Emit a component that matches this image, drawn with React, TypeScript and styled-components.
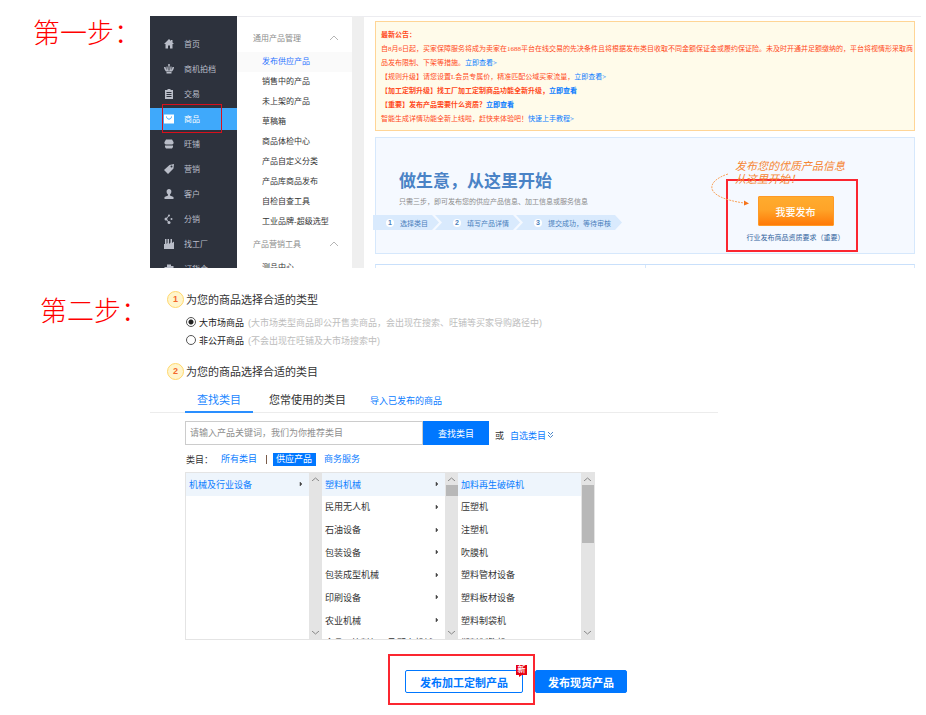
import React from 'react';
import styled, { createGlobalStyle } from 'styled-components';

const GlobalStyle = createGlobalStyle`
  * { box-sizing: border-box; }
  body {
    margin: 0;
    background: #fff;
    color: #333;
    font-family: "Liberation Sans", "Noto Sans CJK SC", sans-serif;
    font-size: 9px;
  }
  ul, h2, h3, p { margin: 0; padding: 0; list-style: none; font-weight: 400; }
  a { text-decoration: none; color: #0a7cff; }
  button, input { font-family: inherit; }
`;

const Page = styled.main`
  padding: 16px 5px 10px 0;
`;

const Step = styled.section`
  display: flex;
`;

const StepLabel = styled.h2<{ $indent: number; $top: number }>`
  flex: 0 0 150px;
  padding: ${p => p.$top}px 0 0 ${p => p.$indent}px;
  color: #ff0000;
  font-family: "Noto Sans CJK SC", sans-serif;
  font-size: 27px;
  font-weight: 300;
  line-height: 32px;
  white-space: nowrap;
`;

/* ---------- step one: seller console ---------- */

const Console = styled.div`
  flex: 1;
  min-width: 0;
  display: flex;
  height: 252px;
  overflow: hidden;
`;

const Sidebar = styled.nav`
  flex: 0 0 87px;
  padding-top: 17px;
  background: #2d323d;
`;

const NavList = styled.ul`
  display: grid;
  gap: 3px;
`;

const NavItem = styled.li`
  position: relative;
`;

const NavLink = styled.a<{ $active?: boolean }>`
  display: flex;
  align-items: center;
  gap: 10px;
  height: 22px;
  padding: 0 0 1px 14px;
  font-size: 8px;
  color: ${p => (p.$active ? '#fff' : '#b9bdc8')};
  background: ${p => (p.$active ? '#3fa9fb' : 'transparent')};
  svg { display: block; }
`;

const NavMark = styled.span`
  position: absolute;
  left: 12px;
  top: -4px;
  width: 60px;
  height: 29px;
  border: 1px solid #d8101c;
`;

const SubMenu = styled.nav`
  flex: 0 0 115px;
  padding-top: 9px;
  border-top: 1px solid #ececf0;
  font-size: 8px;
`;

const GroupButton = styled.button`
  display: flex;
  align-items: center;
  justify-content: space-between;
  width: 100%;
  height: 26px;
  padding: 0 13px 3px 16px;
  border: 0;
  background: none;
  color: #8c8c8c;
  font-size: 8px;
`;

const SubLink = styled.a<{ $active?: boolean }>`
  display: block;
  padding-left: 25px;
  line-height: 20px;
  color: ${p => (p.$active ? '#2b72ff' : '#333')};
  background: ${p => (p.$active ? '#fafafa' : 'transparent')};
`;

const Workspace = styled.div`
  flex: 1;
  min-width: 0;
  display: grid;
  align-content: start;
  gap: 6px;
  padding: 4px 6px 0 11px;
  border-left: 12px solid #efefef;
  border-top: 1px solid #ececf0;
`;

const Notice = styled.div`
  padding: 6px 1px 4px 5px;
  border: 1px solid #ffd596;
  background: #fffbea;
  color: #ff4a1c;
  font-family: "Liberation Serif", "Noto Sans CJK SC", sans-serif;
  font-size: 7px;
  line-height: 14px;
  a { display: inline-block; height: 14px; vertical-align: top; }
`;

const NoticeLine = styled.p<{ $bold?: boolean }>`
  font-weight: ${p => (p.$bold ? 700 : 400)};
`;

const Banner = styled.div`
  display: flex;
  justify-content: space-between;
  height: 117px;
  border: 1px solid #d6e8fc;
  background: #f5f9ff;
`;

const Pitch = styled.div`
  padding-top: 32px;
`;

const PitchTitle = styled.h3`
  padding-left: 23px;
  color: #4a83c6;
  font-size: 17px;
  font-weight: 700;
  line-height: 24px;
`;

const PitchText = styled.p`
  padding-left: 23px;
  color: #8b8b8b;
  font-size: 7px;
  line-height: 16px;
`;

const Ribbon = styled.ul`
  display: flex;
  margin: 5px 0 0 -3px;
`;

const RibbonStep = styled.li<{ $first?: boolean }>`
  display: flex;
  align-items: center;
  gap: 6px;
  height: 15px;
  margin-left: ${p => (p.$first ? 0 : -4)}px;
  padding: 0 11px 0 ${p => (p.$first ? 13 : 18)}px;
  background: #d9eafd;
  color: #4a7fbc;
  font-size: 7px;
  white-space: nowrap;
  clip-path: ${p =>
    p.$first
      ? 'polygon(0 0, calc(100% - 7px) 0, 100% 50%, calc(100% - 7px) 100%, 0 100%)'
      : 'polygon(0 0, calc(100% - 7px) 0, 100% 50%, calc(100% - 7px) 100%, 0 100%, 7px 50%)'};
`;

const RibbonNumber = styled.span`
  width: 8px;
  height: 8px;
  border-radius: 50%;
  background: #fff;
  font-size: 7px;
  font-weight: 700;
  line-height: 8px;
  text-align: center;
`;

const Callout = styled.div`
  position: relative;
  display: flex;
  flex-direction: column;
  align-items: center;
  align-self: flex-start;
  width: 132px;
  height: 73px;
  margin: 41px 56px 0 0;
  padding: 15px 0 0 7px;
  border: 2px solid #fb2630;
`;

const HandNote = styled.p`
  position: absolute;
  left: 7px;
  top: -21px;
  color: #f58634;
  font-size: 11px;
  font-style: italic;
  line-height: 13px;
  white-space: nowrap;
`;

const CurvedArrow = styled.svg`
  position: absolute;
  left: -20px;
  top: -8px;
`;

const PublishButton = styled.button`
  flex: none;
  width: 76px;
  height: 30px;
  padding: 0;
  border: 1px solid #ff9a26;
  border-radius: 1px;
  background: linear-gradient(#ffab2e, #ffa428 45%, #ff7a08);
  color: #fff;
  font-size: 10px;
  font-weight: 500;
`;

const RuleLink = styled.a`
  margin-top: 5px;
  color: #33659e;
  font-size: 7px;
  line-height: 14px;
  white-space: nowrap;
`;

const Panels = styled.div`
  display: grid;
  grid-template-columns: 1fr 1fr;
  height: 20px;
  margin-top: 4px;
  border: 1px solid #d6e8fc;
  border-top-color: #c9e0fb;
`;

const Panel = styled.div`
  & + & { border-left: 1px solid #d6e8fc; }
`;

/* ---------- step two: category form ---------- */

const Form = styled.form`
  flex: 1;
  min-width: 0;
  padding-top: 22px;
`;

const FormHeading = styled.h3`
  display: flex;
  align-items: center;
  gap: 2px;
  height: 18px;
  padding-left: 17px;
  font-size: 11px;
  color: #333;
`;

const StepBadge = styled.span`
  width: 17px;
  height: 17px;
  border: 1px solid #ffd76b;
  border-radius: 50%;
  background: #fff5cc;
  color: #f4682c;
  font-size: 9px;
  font-weight: 700;
  line-height: 15px;
  text-align: center;
`;

const Choices = styled.div`
  padding: 5px 0 13px 36px;
`;

const Choice = styled.label`
  display: flex;
  align-items: center;
  height: 18px;
  font-size: 9px;
  color: #222;
`;

const Radio = styled.input`
  appearance: none;
  width: 10px;
  height: 10px;
  margin: 0 3px 0 0;
  border: 1px solid #555;
  border-radius: 50%;
  background: #fff;
  &:checked { background: radial-gradient(circle, #222 0 2px, #fff 3px); }
`;

const Hint = styled.span`
  margin-left: 4px;
  color: #bdbdbd;
`;

const Tabs = styled.div`
  display: flex;
  max-width: 568px;
  height: 25px;
  margin-top: 8px;
  padding-left: 35px;
  border-bottom: 1px solid #ececec;
`;

const Tab = styled.button<{ $active?: boolean }>`
  height: 25px;
  padding: 0 12px;
  border: 0;
  border-bottom: 2px solid ${p => (p.$active ? '#2a8fff' : 'transparent')};
  background: none;
  color: ${p => (p.$active ? '#1a86ff' : '#333')};
  font-size: 11px;
  line-height: 22px;
  & + & { padding: 0 16px; }
`;

const ImportLink = styled.a`
  margin-left: 8px;
  line-height: 26px;
`;

const Body = styled.div`
  padding: 8px 0 0 35px;
`;

const SearchRow = styled.div`
  display: flex;
  align-items: center;
`;

const SearchInput = styled.input`
  width: 238px;
  height: 24px;
  padding: 0 4px;
  border: 1px solid #ccc;
  border-radius: 0;
  font-size: 9px;
  &::placeholder { color: #8f8f8f; opacity: 1; }
`;

const SearchButton = styled.button`
  width: 66px;
  height: 24px;
  padding: 0;
  border: 0;
  background: #0077ff;
  color: #fff;
  font-size: 9px;
`;

const Or = styled.span`
  margin: 4px 6px 0;
`;

const PickLink = styled.a`
  display: flex;
  align-items: center;
  gap: 1px;
  margin-top: 4px;
`;

const Filter = styled.div`
  display: flex;
  align-items: center;
  height: 27px;
  padding: 2px 0 0 1px;
`;

const FilterLink = styled.a<{ $on?: boolean }>`
  margin-right: ${p => (p.$on ? 5 : 0)}px;
  padding: 0 ${p => (p.$on ? 4 : 0)}px 0 3px;
  line-height: 13px;
  background: ${p => (p.$on ? '#0077ff' : 'transparent')};
  color: ${p => (p.$on ? '#fff' : '#0a7cff')};
`;

const FilterBar = styled.span`
  width: 1px;
  height: 9px;
  margin: 0 6px 0 9px;
  background: #7a5c4a;
`;

const FilterLabel = styled.span`
  width: 32px;
`;

const Browser = styled.div`
  display: grid;
  grid-template-columns: repeat(3, 1fr);
  width: 410px;
  max-width: 100%;
  height: 168px;
  border: 1px solid #e4e4e4;
`;

const Column = styled.div`
  display: flex;
  min-width: 0;
  overflow: hidden;
`;

const Rows = styled.ul`
  flex: 1;
  display: grid;
  grid-template-rows: repeat(8, 1fr);
  height: 181px;
`;

const RowLink = styled.a<{ $active?: boolean }>`
  display: flex;
  align-items: center;
  justify-content: space-between;
  height: 100%;
  padding: 0 6px 0 3px;
  white-space: nowrap;
  background: ${p => (p.$active ? '#eef5fc' : 'transparent')};
  color: ${p => (p.$active ? '#0a7cff' : '#333')};
`;

const Track = styled.div`
  flex: 0 0 13px;
  display: flex;
  flex-direction: column;
  align-items: center;
  background: #e4e4e4;
  svg { flex: none; margin: 4px 0; }
  svg:last-child { margin-top: auto; }
`;

const Thumb = styled.span<{ $size: number }>`
  width: 12px;
  height: ${p => p.$size}px;
  background: #b8b8b8;
`;

const Actions = styled.div`
  display: flex;
  align-items: baseline;
  padding: 14px 0 0 203px;
`;

const CustomFrame = styled.div`
  padding: 14px 10px 10px 15px;
  border: 2px solid #fb2630;
`;

const CustomWrap = styled.div`
  position: relative;
`;

const ActionButton = styled.button<{ $primary?: boolean }>`
  display: block;
  height: 23px;
  padding: 0 ${p => (p.$primary ? 12 : 14)}px;
  border: 1px solid #0077ff;
  border-radius: 2px;
  background: ${p => (p.$primary ? '#0077ff' : '#fff')};
  color: ${p => (p.$primary ? '#fff' : '#0077ff')};
  font-size: 11px;
  font-weight: 700;
  white-space: nowrap;
`;

const NewBadge = styled.span`
  position: absolute;
  right: -4px;
  top: -5px;
  width: 11px;
  height: 10px;
  background: #e60012;
  color: #fff;
  font-size: 8px;
  font-weight: 500;
  line-height: 10px;
  text-align: center;
  &::after {
    content: "";
    position: absolute;
    left: 3px;
    top: 10px;
    border-top: 2px solid #e60012;
    border-right: 3px solid transparent;
  }
`;

const icons: Record<string, React.ReactNode> = {
  home: <path d="M10 0 0 10h3v9h5v-6h4v6h5v-9h3l-3-3V2h-3v2z" />,
  crown: (
    <path d="M10 0a2 2 0 0 1 2 2l-1 2v9h1l1-8h2v8l2-7h3c0 4-2 6-4 9H4C2 12 0 10 0 6h3l2 7V5h2l1 8h1V4L8 2a2 2 0 0 1 2-2zM5 16h10v3H5z" />
  ),
  clipboard: (
    <path fillRule="evenodd" d="M7 0h6v2h5v18H2V2h5zM5 6v2h10V6zm0 4v2h10v-2zm0 4v2h10v-2z" />
  ),
  bag: (
    <>
      <path d="M0 1h20v18H0z" />
      <path d="M5 5c0 7 10 7 10 0" fill="none" stroke="#3fa9fb" strokeWidth="2" />
    </>
  ),
  shop: <path d="M4 1h12l3 5c1 3-1 5-3 5H4c-2 0-4-2-3-5zM2 13h16v3l-2 3H4l-2-3z" />,
  tag: <path fillRule="evenodd" d="M11 2 20 0l-1 9L8 20 0 12zM15 3a2 2 0 1 0 0 4 2 2 0 0 0 0-4z" />,
  user: <path d="M10 0c6 0 6 8 2 11v2l7 3v4H1v-4l7-3v-2C4 8 4 0 10 0z" />,
  share: (
    <>
      <circle cx="4" cy="10" r="3" />
      <circle cx="10" cy="3" r="2" />
      <circle cx="10" cy="17" r="3" />
      <circle cx="15" cy="10" r="2" />
      <path d="M4 10l6-7M4 10l6 7" stroke="currentColor" strokeWidth="2" />
    </>
  ),
  factory: <path d="M2 0h3v10l2-2V0h3v10l3-3V0h3v8l4-3v15H0V10h2z" />,
  order: <path d="M6 1h8v3h5v16h-8V9H9v8H1V6h5z" />,
};

const NavIcon = ({ name }: { name: string }) => (
  <svg width="10" height="10" viewBox="0 0 20 20" fill="currentColor" aria-hidden="true">
    {icons[name]}
  </svg>
);

const ChevronUp = () => (
  <svg width="10" height="6" viewBox="0 0 10 6" fill="none" stroke="#b5b5b5" aria-hidden="true">
    <path d="M1 5 5 1l4 4" />
  </svg>
);

const Caret = () => (
  <svg width="4" height="6" viewBox="0 0 4 6" fill="#444" aria-hidden="true">
    <path d="M1 1v4l2-2z" stroke="#444" strokeWidth=".5" />
  </svg>
);

const TrackArrow = ({ down }: { down?: boolean }) => (
  <svg width="7" height="4" viewBox="0 0 7 4" fill="none" stroke="#888" aria-hidden="true">
    <path d={down ? 'M0 0l3.500 3L7 0' : 'M0 4l3.500-3L7 4'} />
  </svg>
);

const navItems: [string, string][] = [
  ['home', '首页'],
  ['crown', '商机拍档'],
  ['clipboard', '交易'],
  ['bag', '商品'],
  ['shop', '旺铺'],
  ['tag', '营销'],
  ['user', '客户'],
  ['share', '分销'],
  ['factory', '找工厂'],
  ['order', '订货会'],
];

const productLinks = [
  '发布供应产品', '销售中的产品', '未上架的产品', '草稿箱', '商品体检中心',
  '产品自定义分类', '产品库商品发布', '自检自查工具', '工业品牌-超级选型',
];

const columns: { rows: string[]; carets: boolean; thumb: number }[] = [
  { rows: ['机械及行业设备'], carets: true, thumb: 0 },
  {
    rows: ['塑料机械', '民用无人机', '石油设备', '包装设备', '包装成型机械', '印刷设备', '农业机械', '食品、饮料加工及配套机械'],
    carets: true,
    thumb: 11,
  },
  {
    rows: ['加料再生破碎机', '压塑机', '注塑机', '吹膜机', '塑料管材设备', '塑料板材设备', '塑料制袋机', '塑料制管机'],
    carets: false,
    thumb: 58,
  },
];

export default function App() {
  return (
    <>
      <GlobalStyle />
      <Page lang="zh-CN">
        <Step>
          <StepLabel $indent={33} $top={0}>第一步：</StepLabel>
          <Console>
            <Sidebar>
              <NavList>
                {navItems.map(([icon, label]) => {
                  const active = label === '商品';
                  return (
                    <NavItem key={label}>
                      <NavLink href="#" $active={active}>
                        <NavIcon name={icon} />
                        {label}
                      </NavLink>
                      {active && <NavMark />}
                    </NavItem>
                  );
                })}
              </NavList>
            </Sidebar>
            <SubMenu>
              <GroupButton type="button">通用产品管理<ChevronUp /></GroupButton>
              <ul>
                {productLinks.map((label, i) => (
                  <li key={label}><SubLink href="#" $active={i === 0}>{label}</SubLink></li>
                ))}
              </ul>
              <GroupButton type="button">产品营销工具<ChevronUp /></GroupButton>
              <ul>
                <li><SubLink href="#">测品中心</SubLink></li>
              </ul>
            </SubMenu>
            <Workspace>
              <Notice>
                <NoticeLine $bold>最新公告：</NoticeLine>
                <NoticeLine>
                  自8月6日起，买家保障服务将成为卖家在1688平台在线交易的先决条件且将根据发布类目收取不同金额保证金或履约保证险。未及时开通并足额缴纳的，平台将视情形采取商品发布限制、下架等措施。<a href="#">立即查看&gt;</a>
                </NoticeLine>
                <NoticeLine>【规则升级】请您设置L会员专属价，精准匹配公域买家流量，<a href="#">立即查看&gt;</a></NoticeLine>
                <NoticeLine $bold>【加工定制升级】找工厂加工定制商品功能全新升级，<a href="#">立即查看</a></NoticeLine>
                <NoticeLine $bold>【重要】发布产品需要什么资质？<a href="#">立即查看</a></NoticeLine>
                <NoticeLine>智能生成详情功能全新上线啦，赶快来体验吧！<a href="#">快速上手教程&gt;</a></NoticeLine>
              </Notice>
              <Banner>
                <Pitch>
                  <PitchTitle>做生意，从这里开始</PitchTitle>
                  <PitchText>只需三步，即可发布您的供应产品信息、加工信息或服务信息</PitchText>
                  <Ribbon>
                    <RibbonStep $first><RibbonNumber>1</RibbonNumber>选择类目</RibbonStep>
                    <RibbonStep><RibbonNumber>2</RibbonNumber>填写产品详情</RibbonStep>
                    <RibbonStep><RibbonNumber>3</RibbonNumber>提交成功，等待审核</RibbonStep>
                  </Ribbon>
                </Pitch>
                <Callout>
                  <HandNote>发布您的优质产品信息<br />从这里开始！</HandNote>
                  <CurvedArrow width="44" height="36" viewBox="0 0 44 36" fill="none" aria-hidden="true">
                    <path d="M20 1C-2 8-6 24 36 30" stroke="#f9a45c" strokeDasharray="2 1" />
                    <path d="M36 27.500v5l5-2z" fill="#f5741c" />
                  </CurvedArrow>
                  <PublishButton type="button">我要发布</PublishButton>
                  <RuleLink href="#">行业发布商品资质要求（重要）</RuleLink>
                </Callout>
              </Banner>
              <Panels><Panel /><Panel /></Panels>
            </Workspace>
          </Console>
        </Step>

        <Step>
          <StepLabel $indent={40} $top={26}>第二步：</StepLabel>
          <Form onSubmit={e => e.preventDefault()}>
            <FormHeading><StepBadge>1</StepBadge>为您的商品选择合适的类型</FormHeading>
            <Choices>
              <Choice>
                <Radio type="radio" name="kind" defaultChecked />
                大市场商品<Hint>(大市场类型商品即公开售卖商品，会出现在搜索、旺铺等买家导购路径中)</Hint>
              </Choice>
              <Choice>
                <Radio type="radio" name="kind" />
                非公开商品<Hint>(不会出现在旺铺及大市场搜索中)</Hint>
              </Choice>
            </Choices>
            <FormHeading><StepBadge>2</StepBadge>为您的商品选择合适的类目</FormHeading>
            <Tabs>
              <Tab type="button" $active>查找类目</Tab>
              <Tab type="button">您常使用的类目</Tab>
              <ImportLink href="#">导入已发布的商品</ImportLink>
            </Tabs>
            <Body>
              <SearchRow>
                <SearchInput type="text" aria-label="产品关键词" placeholder="请输入产品关键词，我们为你推荐类目" />
                <SearchButton type="submit">查找类目</SearchButton>
                <Or>或</Or>
                <PickLink href="#">
                  自选类目
                  <svg width="7" height="8" viewBox="0 0 7 8" fill="none" stroke="#4a86c8" aria-hidden="true">
                    <path d="M1 1l2.500 2.500L6 1M1 4l2.500 2.500L6 4" />
                  </svg>
                </PickLink>
              </SearchRow>
              <Filter>
                <FilterLabel>类目：</FilterLabel>
                <FilterLink href="#">所有类目</FilterLink>
                <FilterBar />
                <FilterLink href="#" $on>供应产品</FilterLink>
                <FilterLink href="#">商务服务</FilterLink>
              </Filter>
              <Browser>
                {columns.map(col => (
                  <Column key={col.rows[0]}>
                    <Rows>
                      {col.rows.map((label, i) => (
                        <li key={label}>
                          <RowLink href="#" $active={i === 0}>
                            {label}
                            {col.carets && <Caret />}
                          </RowLink>
                        </li>
                      ))}
                    </Rows>
                    <Track>
                      <TrackArrow />
                      {col.thumb > 0 && <Thumb $size={col.thumb} />}
                      <TrackArrow down />
                    </Track>
                  </Column>
                ))}
              </Browser>
              <Actions>
                <CustomFrame>
                  <CustomWrap>
                    <ActionButton type="button">发布加工定制产品</ActionButton>
                    <NewBadge>新</NewBadge>
                  </CustomWrap>
                </CustomFrame>
                <ActionButton type="button" $primary>发布现货产品</ActionButton>
              </Actions>
            </Body>
          </Form>
        </Step>
      </Page>
    </>
  );
}
